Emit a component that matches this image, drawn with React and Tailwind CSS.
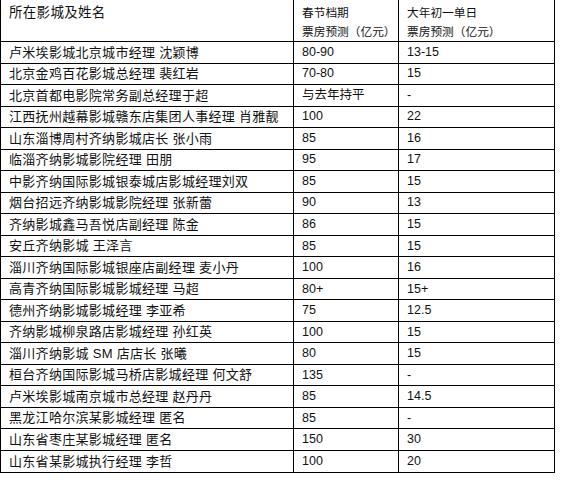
import React from "react";

const rows = [
  ["卢米埃影城北京城市经理 沈颖博", "80-90", "13-15"],
  ["北京金鸡百花影城总经理 裴红岩", "70-80", "15"],
  ["北京首都电影院常务副总经理于超", "与去年持平", "-"],
  ["江西抚州越幕影城赣东店集团人事经理 肖雅靓", "100", "22"],
  ["山东淄博周村齐纳影城店长 张小雨", "85", "16"],
  ["临淄齐纳影城影院经理 田朋", "95", "17"],
  ["中影齐纳国际影城银泰城店影城经理刘双", "85", "15"],
  ["烟台招远齐纳影城影院经理 张新蕾", "90", "13"],
  ["齐纳影城鑫马吾悦店副经理 陈金", "86", "15"],
  ["安丘齐纳影城 王泽言", "85", "15"],
  ["淄川齐纳国际影城银座店副经理 麦小丹", "100", "16"],
  ["高青齐纳国际影城影城经理 马超", "80+", "15+"],
  ["德州齐纳影城影城经理 李亚希", "75", "12.5"],
  ["齐纳影城柳泉路店影城经理 孙红英", "100", "15"],
  ["淄川齐纳影城 SM 店店长 张曦", "80", "15"],
  ["桓台齐纳国际影城马桥店影城经理 何文舒", "135", "-"],
  ["卢米埃影城南京城市总经理 赵丹丹", "85", "14.5"],
  ["黑龙江哈尔滨某影城经理 匿名", "85", "-"],
  ["山东省枣庄某影城经理 匿名", "150", "30"],
  ["山东省某影城执行经理 李哲", "100", "20"],
];

export default function App() {
  return (
    <div
      className="w-[562px] h-[489px] bg-white text-[#111]"
      style={{ fontFamily: '"Liberation Sans", "Noto Sans CJK SC", sans-serif' }}
    >
      <div className="w-[555px] border-l border-r border-b border-black">
        <div className="flex h-[42px] border-b border-black">
          <div className="w-[293px] border-r border-black pl-2 pt-[3px] leading-[19px] text-[13.5px] tracking-[0.3px]">
            所在影城及姓名
          </div>
          <div className="w-[105px] border-r border-black pl-2 pt-[3px] leading-[19px] text-[11.7px] whitespace-nowrap">
            <div>春节档期</div>
            <div>票房预测（亿元）</div>
          </div>
          <div className="flex-1 pl-2 pt-[3px] leading-[19px] text-[11.7px] whitespace-nowrap">
            <div>大年初一单日</div>
            <div>票房预测（亿元）</div>
          </div>
        </div>
        {rows.map((r, i) => (
          <div
            key={i}
            className={`flex h-[21.53px] items-stretch ${
              i === rows.length - 1 ? "" : "border-b border-black"
            }`}
          >
            <div className="w-[293px] border-r border-black pl-2 flex items-center text-[13px] tracking-[0.3px] whitespace-nowrap overflow-hidden">
              {r[0]}
            </div>
            <div className="w-[105px] border-r border-black pl-2 flex items-center text-[12.5px] whitespace-nowrap">
              {r[1]}
            </div>
            <div className="flex-1 pl-2 flex items-center text-[12.5px]">
              {r[2]}
            </div>
          </div>
        ))}
      </div>
    </div>
  );
}
